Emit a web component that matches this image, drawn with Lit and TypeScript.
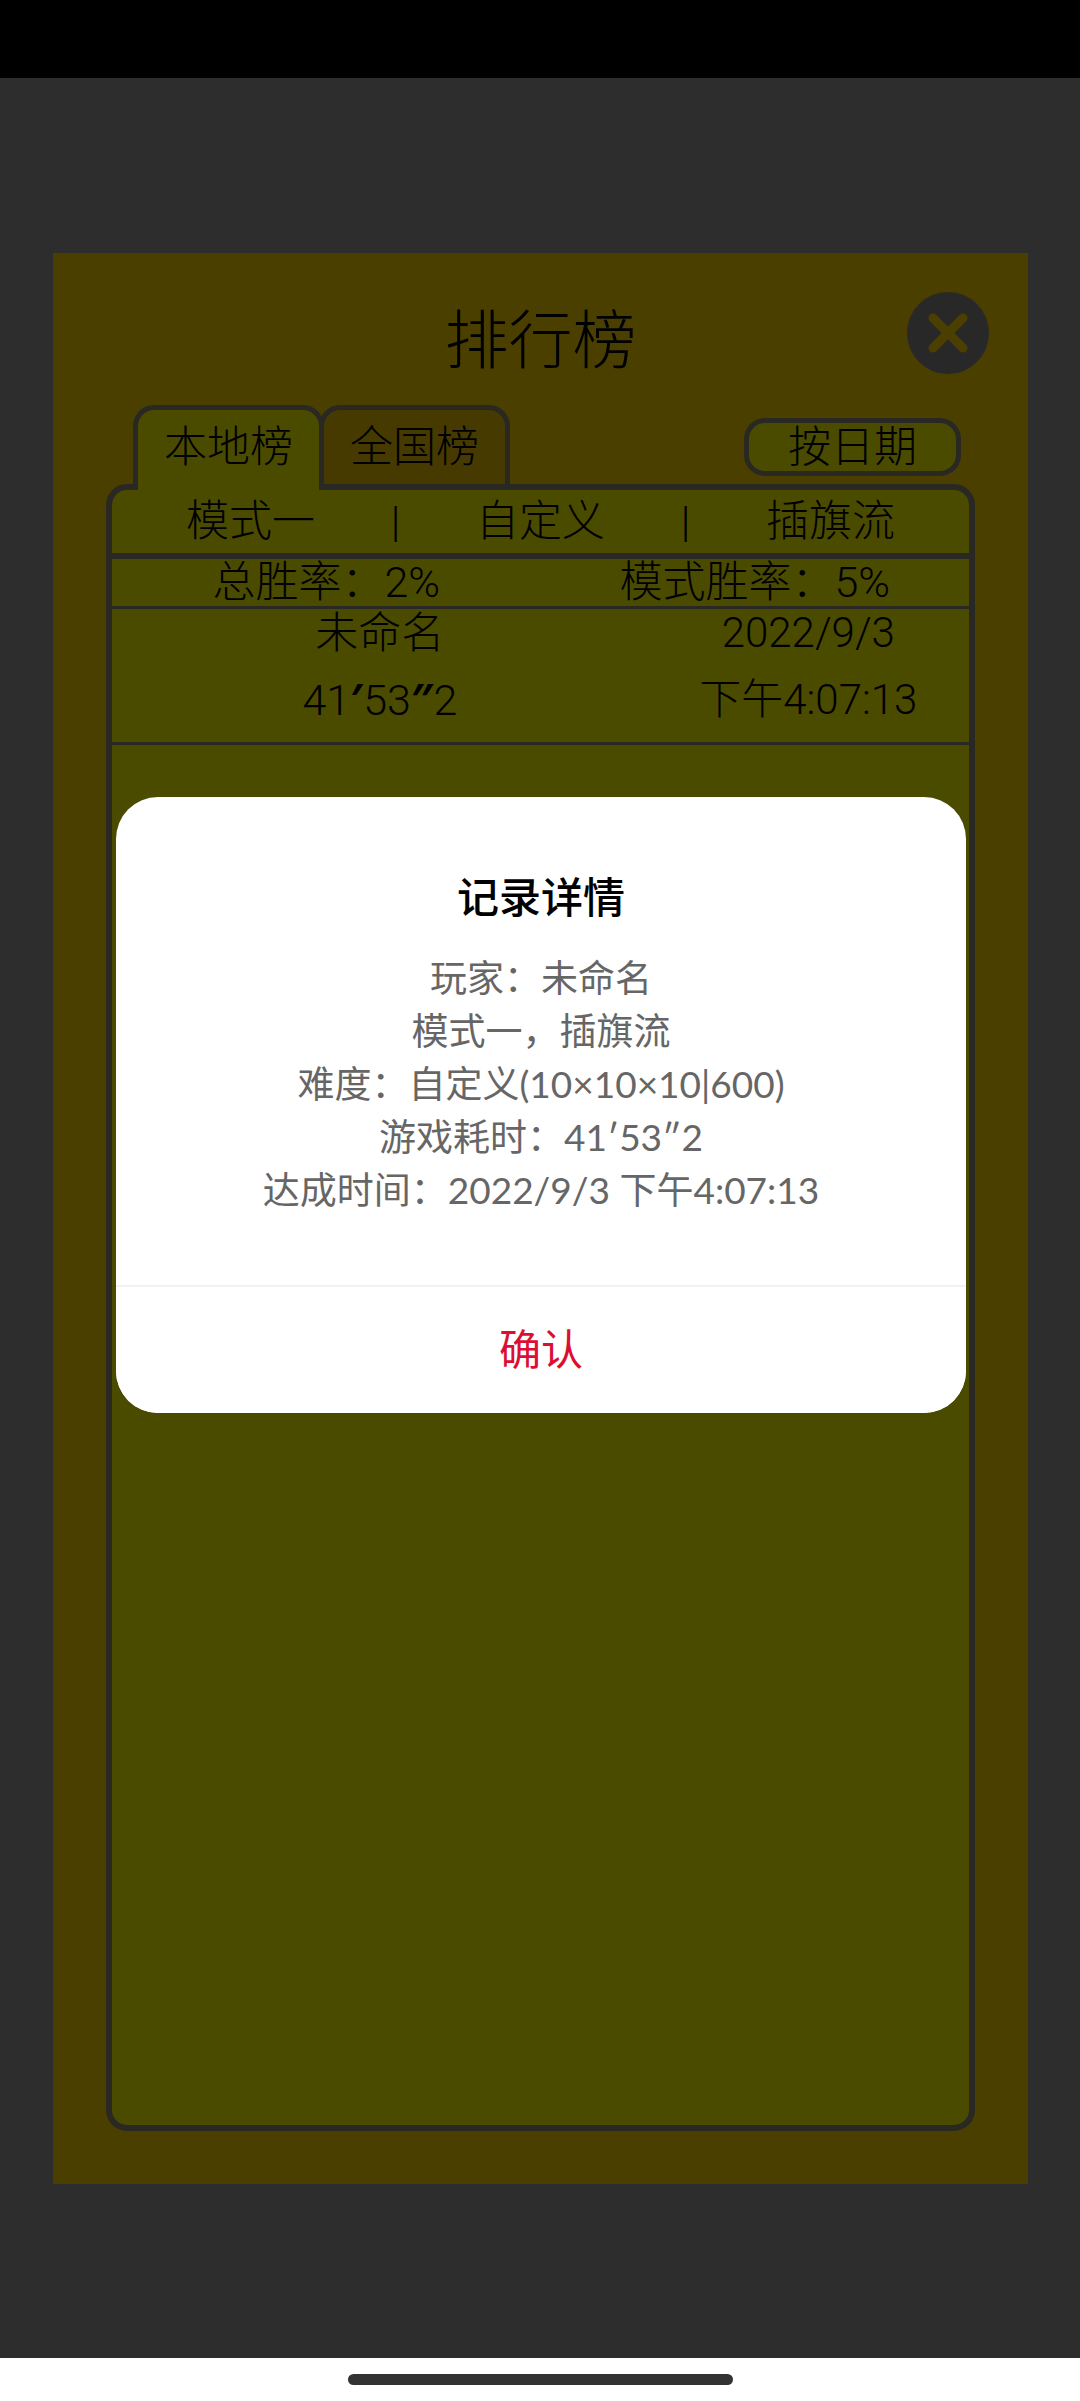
import { LitElement, html, css } from "lit";
import { customElement, property, state } from "lit/decorators.js";

interface GameRecord {
  player: string;
  minutes: string;
  seconds: string;
  tenths: string;
  date: string;
  clock: string;
}

@customElement("record-dialog")
class RecordDialog extends LitElement {
  @property({ type: String }) heading = "";
  @property({ attribute: false }) lines: string[] = [];

  static styles = css`
    :host {
      display: block;
      width: 100%;
    }
    .dialog {
      display: flex;
      flex-direction: column;
      background: #fff;
      border-radius: 42px;
      overflow: hidden;
      text-align: center;
      font-family: Lato, "Noto Sans CJK SC", sans-serif;
      font-weight: 400;
    }
    .body {
      padding: 68px 40px 69px;
    }
    .heading {
      margin: 0 0 26px;
      color: #000;
      font-size: 42px;
      line-height: 60px;
      font-weight: 500;
      font-family: "Noto Sans CJK SC", sans-serif;
    }
    .lines {
      margin: 0;
      padding: 0;
      list-style: none;
      color: #666;
      font-size: 37px;
      line-height: 53px;
    }
    .confirm {
      border: 0;
      border-top: 2px solid #f2f2f2;
      padding: 0 0 2px;
      background: #fff;
      color: #dc0f32;
      font: inherit;
      font-size: 42px;
      line-height: 124px;
    }
  `;

  render() {
    return html`
      <section class="dialog" role="dialog" aria-modal="true" aria-labelledby="heading">
        <div class="body">
          <h2 class="heading" id="heading">${this.heading}</h2>
          <ul class="lines">
            ${this.lines.map((line) => html`<li>${line}</li>`)}
          </ul>
        </div>
        <button class="confirm" type="button"
          @click=${() => this.dispatchEvent(new CustomEvent("confirm"))}>确认</button>
      </section>
    `;
  }
}

@customElement("app-root")
class AppRoot extends LitElement {
  @state() private detailOpen = true;

  private records: GameRecord[] = [
    { player: "未命名", minutes: "41", seconds: "53", tenths: "2", date: "2022/9/3", clock: "下午4:07:13" },
  ];

  private detail = [
    "玩家：未命名",
    "模式一，插旗流",
    "难度：自定义(10×10×10|600)",
    "游戏耗时：41′53″2",
    "达成时间：2022/9/3 下午4:07:13",
  ];

  static styles = css`
    :host {
      --line: #292823;
      --orange: #4b3f00;
      --lime: #4b4b00;
      display: flex;
      flex-direction: column;
      min-height: 100vh;
      color: #000;
      font-family: Roboto, "Noto Sans CJK SC", sans-serif;
      font-weight: 300;
      font-size: 43px;
    }
    button {
      font: inherit;
      color: inherit;
      background: none;
      border: 0;
      padding: 0;
      white-space: nowrap;
    }
    .status {
      height: 78px;
      background: #000;
    }
    .stage {
      position: relative;
      flex: 1;
      display: flex;
      background: #2d2d2d;
      padding: 175px 52px 174px 53px;
    }
    .panel {
      flex: 1;
      display: flex;
      flex-direction: column;
      background: var(--orange);
      padding-bottom: 53px;
    }
    .header {
      display: grid;
      grid-template-columns: 1fr auto 1fr;
      align-items: start;
      padding: 39px 39px 13px;
    }
    .title {
      grid-column: 2;
      margin: 0;
      font-size: 64px;
      line-height: 100px;
      font-weight: 300;
    }
    .close {
      justify-self: end;
      width: 82px;
      height: 82px;
    }
    .close svg {
      display: block;
    }
    .tabs {
      display: flex;
      padding: 0 67px 0 80px;
    }
    .tab {
      box-sizing: border-box;
      width: 191px;
      height: 79px;
      border: 5px solid var(--line);
      border-bottom: 0;
      border-radius: 21px 21px 0 0;
      background: #463a00;
      line-height: 74px;
    }
    .tab + .tab {
      margin-left: -5px;
    }
    .tab.active {
      position: relative;
      z-index: 1;
      height: 85px;
      margin-bottom: -6px;
      padding-bottom: 6px;
      background: var(--lime);
    }
    .sort {
      box-sizing: border-box;
      width: 217px;
      height: 58px;
      margin: 13px 0 0 auto;
      border: 5px solid var(--line);
      border-radius: 21px;
      background: var(--lime);
      line-height: 48px;
    }
    .board {
      flex: 1;
      margin: 0 53px;
      border: 6px solid var(--line);
      border-radius: 21px;
      background: var(--lime);
    }
    .filters {
      display: grid;
      grid-template-columns: repeat(5, 1fr);
      justify-items: center;
      padding: 0 66px;
      border-bottom: 6px solid var(--line);
      line-height: 63px;
    }
    .rates {
      display: grid;
      grid-template-columns: 1fr 1fr;
      justify-items: center;
      border-bottom: 3px solid var(--line);
      line-height: 47px;
    }
    .records {
      margin: 0;
      padding: 0;
      list-style: none;
    }
    .record {
      display: grid;
      grid-template-columns: 5fr 3fr;
      grid-template-rows: 48px 85px;
      place-items: center;
      border-bottom: 3px solid var(--line);
      line-height: 48px;
    }
    .when {
      font-size: 42px;
    }
    .prime {
      font-family: "Open Sans", sans-serif;
      font-weight: 700;
    }
    .overlay {
      position: absolute;
      inset: 0;
      display: flex;
      align-items: center;
      padding: 0 114px 226px 116px;
    }
    .nav {
      display: flex;
      justify-content: center;
      padding: 16px 0;
      background: #fff;
    }
    .pill {
      width: 385px;
      height: 11px;
      border-radius: 6px;
      background: #333;
    }
  `;

  render() {
    return html`
      <div class="status"></div>
      <main class="stage">
        <section class="panel">
          <header class="header">
            <h1 class="title">排行榜</h1>
            <button class="close" type="button" aria-label="关闭">
              <svg width="82" height="82" viewBox="0 0 82 82" aria-hidden="true">
                <circle cx="41" cy="41" r="41" fill="#282828" />
                <path d="M26 26L56 56M56 26L26 56" stroke="#4b3f00" stroke-width="9" stroke-linecap="round" />
              </svg>
            </button>
          </header>
          <nav class="tabs">
            <button class="tab active" type="button">本地榜</button>
            <button class="tab" type="button">全国榜</button>
            <button class="sort" type="button">按日期</button>
          </nav>
          <div class="board">
            <div class="filters">
              <button type="button">模式一</button>
              <span>|</span>
              <button type="button">自定义</button>
              <span>|</span>
              <button type="button">插旗流</button>
            </div>
            <div class="rates">
              <span>总胜率：2%</span>
              <span>模式胜率：5%</span>
            </div>
            <ul class="records">
              ${this.records.map(
                (r) => html`
                  <li class="record">
                    <span>${r.player}</span>
                    <span class="when">${r.date}</span>
                    <span>${r.minutes}<span class="prime">′</span>${r.seconds}<span class="prime">″</span>${r.tenths}</span>
                    <span class="when">${r.clock}</span>
                  </li>
                `
              )}
            </ul>
          </div>
        </section>
        ${this.detailOpen
          ? html`<div class="overlay">
              <record-dialog heading="记录详情" .lines=${this.detail}
                @confirm=${() => (this.detailOpen = false)}></record-dialog>
            </div>`
          : null}
      </main>
      <footer class="nav"><div class="pill"></div></footer>
    `;
  }
}
